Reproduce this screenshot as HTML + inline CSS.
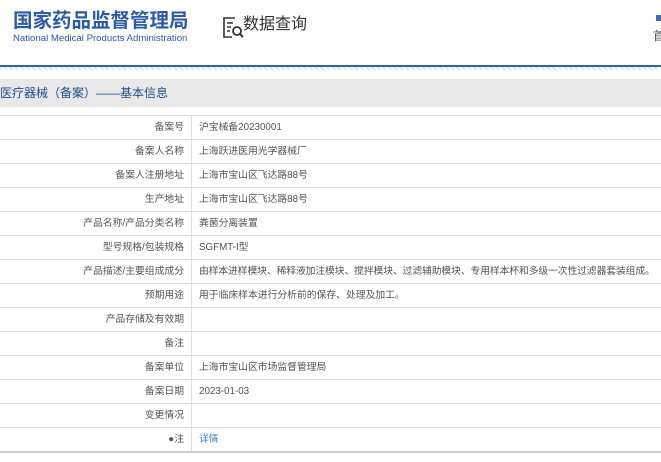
<!DOCTYPE html>
<html><head><meta charset="utf-8"><style>
body{margin:0;width:661px;height:462px;overflow:hidden;background:#fff;font-family:"Liberation Sans","Noto Sans CJK SC",sans-serif;position:relative}
.t1{position:absolute;left:13px;top:7px;font-size:19.5px;font-weight:bold;color:#2a5aa8;line-height:28px}
.t2{position:absolute;left:13px;top:33px;font-size:9.6px;color:#2a5aa8}
.q{position:absolute;left:243px;top:14px;font-size:16px;color:#333;line-height:22px}
.line{position:absolute;left:0;top:65px;width:661px;height:2px;background:#2a66a8}
.hatch{position:absolute;left:0;top:67px;width:661px;height:3px;background:repeating-linear-gradient(45deg,#dbe7f3 0 2px,#fff 2px 4px)}
.bar{position:absolute;left:0;top:79px;width:661px;height:28px;background:#e8e8e8;font-size:12px;color:#1d4f8f;line-height:28px}
table{position:absolute;left:-1px;top:115px;width:663px;border-collapse:collapse;table-layout:fixed;font-size:9.8px;color:#555;border-bottom:2px solid #ccc}
td{border:1px solid #ddd;height:23px;line-height:23px;padding:0 7px;white-space:nowrap;vertical-align:middle}
td.l{text-align:right}
</style></head><body>
<div class="t1">国家药品监督管理局</div>
<div class="t2">National Medical Products Administration</div>
<svg style="position:absolute;left:222px;top:15px" width="22" height="24" viewBox="0 0 22 24"><path d="M13 3H2v19h8" fill="none" stroke="#333" stroke-width="1.6"/><path d="M5 8h6M5 12h4M5 16h3" stroke="#333" stroke-width="1.4"/><circle cx="15" cy="16" r="4" fill="none" stroke="#333" stroke-width="1.8"/><path d="M18 19l3 3" stroke="#333" stroke-width="2"/></svg>
<div class="q">数据查询</div>
<div style="position:absolute;left:656px;top:15px;width:5px;height:6px;background:#4a6ab0"></div>
<div style="position:absolute;left:653px;top:27px;font-size:12px;color:#555">首</div>
<div class="line"></div><div class="hatch"></div>
<div class="bar">医疗器械（备案）——基本信息</div>
<table>
<colgroup><col style="width:192px"><col></colgroup>
<tr><td class="l">备案号</td><td>沪宝械备20230001</td></tr>
<tr><td class="l">备案人名称</td><td>上海跃进医用光学器械厂</td></tr>
<tr><td class="l">备案人注册地址</td><td>上海市宝山区飞达路88号</td></tr>
<tr><td class="l">生产地址</td><td>上海市宝山区飞达路88号</td></tr>
<tr><td class="l">产品名称/产品分类名称</td><td>粪菌分离装置</td></tr>
<tr><td class="l">型号规格/包装规格</td><td>SGFMT-I型</td></tr>
<tr><td class="l">产品描述/主要组成成分</td><td style="letter-spacing:-0.1px">由样本进样模块、稀释液加注模块、搅拌模块、过滤辅助模块、专用样本杯和多级一次性过滤器套装组成。</td></tr>
<tr><td class="l">预期用途</td><td>用于临床样本进行分析前的保存、处理及加工。</td></tr>
<tr><td class="l">产品存储及有效期</td><td></td></tr>
<tr><td class="l">备注</td><td></td></tr>
<tr><td class="l">备案单位</td><td>上海市宝山区市场监督管理局</td></tr>
<tr><td class="l">备案日期</td><td>2023-01-03</td></tr>
<tr><td class="l">变更情况</td><td></td></tr>
<tr><td class="l">●注</td><td style="color:#3a7fd0">详情</td></tr>
</table>
</body></html>
